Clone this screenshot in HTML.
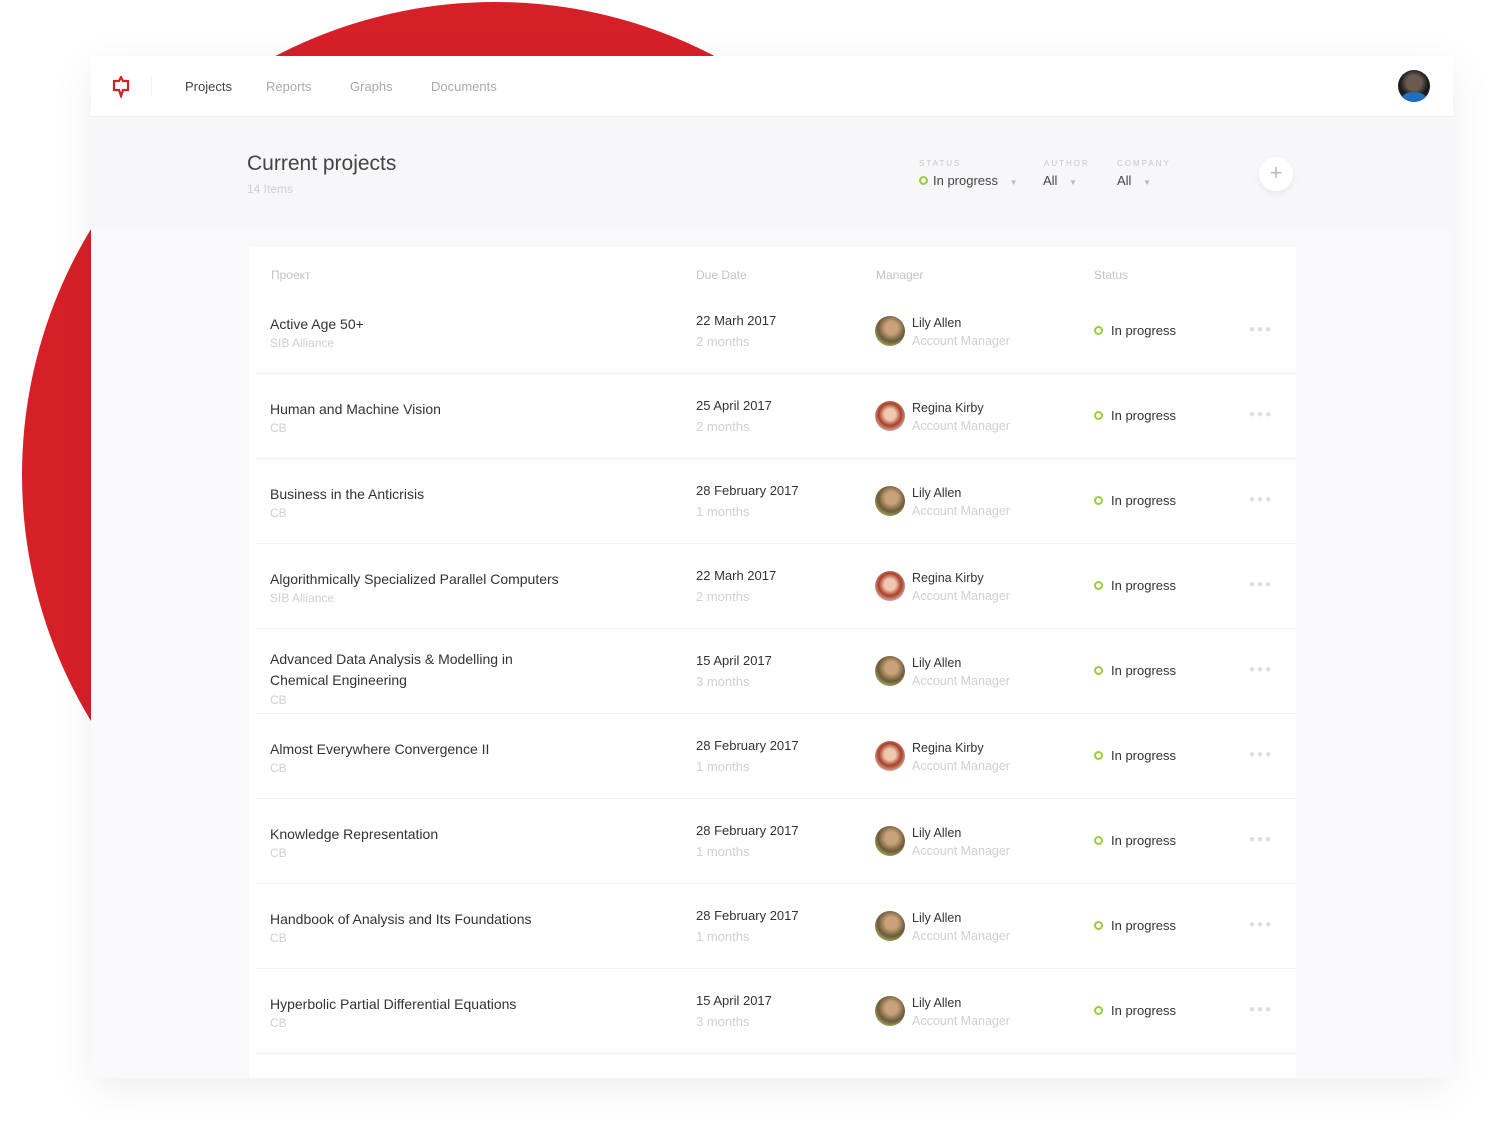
<!DOCTYPE html>
<html><head><meta charset="utf-8"><style>
*{margin:0;padding:0;box-sizing:border-box}
body{width:1500px;height:1126px;background:#fff;position:relative;overflow:hidden;font-family:"Liberation Sans",sans-serif;color:#333}
.circle{position:absolute;left:22px;top:2px;width:946px;height:946px;border-radius:50%;background:#d62028}
.card{position:absolute;left:91px;top:56px;width:1362px;height:1022px;background:#f9f9fb;box-shadow:0 10px 40px rgba(0,0,0,.07)}
.nav{position:absolute;left:0;top:0;width:100%;height:61px;background:#fff;border-bottom:1px solid #f0f0f2}
.nav a{position:absolute;top:23px;font-size:13px;color:#aaa}
.hdr{position:absolute;left:0;top:62px;width:100%;height:112px;background:#f7f7f9}
.abs{position:absolute}
.tbl{position:absolute;left:158px;top:191px;width:1047px;height:831px;background:#fff}
.th{position:absolute;top:21px;font-size:12px;color:#c4c4c4}
.row{position:absolute;left:7px;width:1040px;height:85px;border-bottom:1px solid #f0f0f0}
.t{position:absolute;font-size:14px;color:#333}
.s{position:absolute;font-size:12px;color:#d0d0d0}
.d{position:absolute;font-size:13px;color:#333}
.av{position:absolute;width:30px;height:30px;border-radius:50%}
.dot{position:absolute;width:9px;height:9px;border-radius:50%;border:2px solid #9ccc3c}
.more{position:absolute;font-size:10px;color:#ddd;letter-spacing:2px}
</style></head><body>
<div class="circle"></div>
<div class="card">
 <div class="nav">
  <svg class="abs" style="left:21px;top:20px" width="18" height="22" viewBox="0 0 18 22"><path d="M9 1 L11 5 L16 5 L16 14 L11 14 L9 20 L7 14 L2 14 L2 5 L7 5 Z" fill="none" stroke="#d62028" stroke-width="2.2"/></svg>
  <div class="abs" style="left:60px;top:20px;width:1px;height:20px;background:#f0f0f0"></div>
  <a style="left:94px;color:#444">Projects</a><a style="left:175px">Reports</a><a style="left:259px">Graphs</a><a style="left:340px">Documents</a>
  <div class="abs" style="left:1307px;top:14px;width:32px;height:32px;border-radius:50%;background:radial-gradient(circle at 50% 40%,#6a5a50 30%,#1b1b1b 55%);overflow:hidden"><div style="position:absolute;left:4px;top:22px;width:24px;height:12px;background:#1f6fc0;border-radius:50% 50% 0 0"></div></div>
 </div>
 <div class="hdr">
  <div class="abs" style="left:156px;top:34px;font-size:21px;color:#444">Current projects</div>
  <div class="abs" style="left:156px;top:64px;font-size:12px;color:#d0d0d0">14 Items</div>
  <div class="abs" style="left:828px;top:41px;font-size:8px;letter-spacing:2px;color:#c8c8c8">STATUS</div>
  <div class="abs" style="left:953px;top:41px;font-size:8px;letter-spacing:2px;color:#c8c8c8">AUTHOR</div>
  <div class="abs" style="left:1026px;top:41px;font-size:8px;letter-spacing:2px;color:#c8c8c8">COMPANY</div>
  <div class="dot" style="left:828px;top:58px"></div>
  <div class="abs" style="left:842px;top:55px;font-size:13px;color:#444">In progress <span style="color:#bbb;font-size:8px;margin-left:8px">▼</span></div>
  <div class="abs" style="left:952px;top:55px;font-size:13px;color:#444">All <span style="color:#bbb;font-size:8px;margin-left:8px">▼</span></div>
  <div class="abs" style="left:1026px;top:55px;font-size:13px;color:#444">All <span style="color:#bbb;font-size:8px;margin-left:8px">▼</span></div>
  <div class="abs" style="left:1168px;top:39px;width:34px;height:34px;border-radius:50%;background:#fff;box-shadow:0 3px 8px rgba(0,0,0,.06);text-align:center;line-height:32px;font-size:22px;color:#bbb">+</div>
 </div>
 <div class="tbl">
  <div class="th" style="left:22px">Проект</div><div class="th" style="left:447px">Due Date</div><div class="th" style="left:627px">Manager</div><div class="th" style="left:845px">Status</div>
 </div>
</div>
<div id="rows" style="position:absolute;left:249px;top:247px;width:1047px;height:831px"></div>
<script>
var R=[["Active Age 50+","SIB Alliance","22 Marh 2017","2 months","Lily Allen"],
["Human and Machine Vision","CB","25 April 2017","2 months","Regina Kirby"],
["Business in the Anticrisis","CB","28 February 2017","1 months","Lily Allen"],
["Algorithmically Specialized Parallel Computers","SIB Alliance","22 Marh 2017","2 months","Regina Kirby"],
["Advanced Data Analysis &amp; Modelling in<br>Chemical Engineering","CB","15 April 2017","3 months","Lily Allen"],
["Almost Everywhere Convergence II","CB","28 February 2017","1 months","Regina Kirby"],
["Knowledge Representation","CB","28 February 2017","1 months","Lily Allen"],
["Handbook of Analysis and Its Foundations","CB","28 February 2017","1 months","Lily Allen"],
["Hyperbolic Partial Differential Equations","CB","15 April 2017","3 months","Lily Allen"]];
var h="";
R.forEach(function(r,i){var top=42+i*85;var two=r[0].indexOf("<br>")>0;
var av=r[4]=="Lily Allen"?"radial-gradient(circle at 55% 40%,#c9a27a 25%,#6b5a3a 55%,#a8b060 80%)":"radial-gradient(circle at 50% 45%,#f0c8b0 25%,#a8402a 50%,#e8d8d0 85%)";
h+='<div class="row" style="top:'+top+'px">'+
'<div class="t" style="left:14px;top:'+(two?20:25)+'px;line-height:21px">'+r[0]+'</div>'+
'<div class="s" style="left:14px;top:'+(two?64:47)+'px">'+r[1]+'</div>'+
'<div class="d" style="left:440px;top:24px">'+r[2]+'</div>'+
'<div class="s" style="left:440px;top:45px;font-size:13px">'+r[3]+'</div>'+
'<div class="av" style="left:619px;top:27px;background:'+av+'"></div>'+
'<div class="d" style="left:656px;top:27px;font-size:12.5px">'+r[4]+'</div>'+
'<div class="s" style="left:656px;top:45px;font-size:12.5px">Account Manager</div>'+
'<div class="dot" style="left:838px;top:37px"></div>'+
'<div class="d" style="left:855px;top:34px">In progress</div>'+
'<div class="more" style="left:993px;top:35px">&#9679;&#9679;&#9679;</div></div>';});
document.getElementById("rows").innerHTML=h;
</script>
</body></html>
